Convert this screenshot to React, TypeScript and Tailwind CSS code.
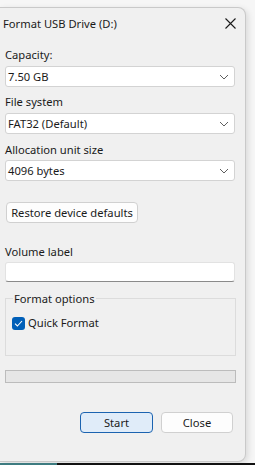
import React from "react";

const Chevron = () => (
  <svg width="10" height="6" viewBox="0 0 10 6" className="mr-[5px]">
    <path d="M1 1 L5 5 L9 1" fill="none" stroke="#5f5f5f" strokeWidth="1" />
  </svg>
);

const Select: React.FC<{ value: string; className?: string }> = ({ value, className }) => (
  <div
    className={`h-[21px] w-[230px] flex items-center justify-between bg-white border border-[#d3d3d3] rounded-[3px] pl-[2px] ${className ?? ""}`}
  >
    <span>{value}</span>
    <Chevron />
  </div>
);

export default function App() {
  return (
    <div
      className="w-[255px] h-[465px] overflow-hidden bg-[#f6f6f6] flex flex-col text-[11.2px] text-[#1a1a1a] leading-[16px] whitespace-nowrap"
      style={{ fontFamily: '"Segoe UI", "Noto Sans", sans-serif' }}
    >
      <div className="h-[7px] shrink-0" />
      <div className="flex shrink-0">
        <div className="w-[246px] h-[455px] bg-[#f0f0f0] border-t border-r border-b border-[#c9c9c9] rounded-tr-[8px] rounded-br-[8px] shadow-[2px_2px_6px_rgba(0,0,0,0.12)] flex flex-col">
          {/* title bar */}
          <div className="h-[31px] flex items-center justify-between pl-[3px] pr-[9px]">
            <span className="text-[11.2px]">Format USB Drive (D:)</span>
            <svg width="11" height="11" viewBox="0 0 11 11">
              <path d="M0.5 0.5 L10.5 10.5 M10.5 0.5 L0.5 10.5" stroke="#1a1a1a" strokeWidth="1.1" />
            </svg>
          </div>

          <div className="pl-[5px] flex flex-col">
            <div className="mt-[8px]">Capacity:</div>
            <Select value="7.50 GB" className="mt-[3px]" />

            <div className="mt-[7px]">File system</div>
            <Select value="FAT32 (Default)" className="mt-[3px]" />

            <div className="mt-[8px]">Allocation unit size</div>
            <Select value="4096 bytes" className="mt-[2px]" />

            <div className="mt-[21px] ml-[1px] w-[132px] h-[21px] flex items-center justify-center bg-[#fdfdfd] border border-[#d0d0d0] rounded-[4px]">
              Restore device defaults
            </div>

            <div className="mt-[21px]">Volume label</div>
            <div className="mt-[2px] w-[230px] h-[20px] bg-white border border-[#e2e2e2] border-b-[#8a8a8a] rounded-[3px]" />

            <div className="relative mt-[16px] w-[231px] h-[58px] border border-[#dcdcdc]">
              <span className="absolute left-[7px] -top-[8px] px-[1px] bg-[#f0f0f0]">Format options</span>
              <div className="mt-[16px] ml-[6px] flex items-center gap-[3px]">
                <div className="w-[13px] h-[13px] rounded-[3px] bg-[#005fb8] flex items-center justify-center">
                  <svg width="9" height="7" viewBox="0 0 9 7">
                    <path d="M1 3.6 L3.4 6 L8 1" fill="none" stroke="white" strokeWidth="1.1" />
                  </svg>
                </div>
                <span>Quick Format</span>
              </div>
            </div>

            <div className="mt-[14px] w-[231px] h-[13px] bg-[#e6e6e6] border border-[#bcbcbc]" />

            <div className="mt-[29px] w-[230px] flex justify-end gap-[8px] pr-[2px]">
              <div className="w-[73px] h-[21px] flex items-center justify-center bg-[#e0ecf9] border border-[#1b63b0] rounded-[4px]">
                Start
              </div>
              <div className="w-[72px] h-[21px] flex items-center justify-center bg-[#fdfdfd] border border-[#d0d0d0] rounded-[4px]">
                Close
              </div>
            </div>
          </div>
        </div>
        <div className="flex-1" />
      </div>
      <div className="mt-auto h-[2px] shrink-0 flex">
        <div className="w-[57px] bg-[#3d7b80]" />
        <div className="flex-1 bg-[#111111]" />
      </div>
    </div>
  );
}
